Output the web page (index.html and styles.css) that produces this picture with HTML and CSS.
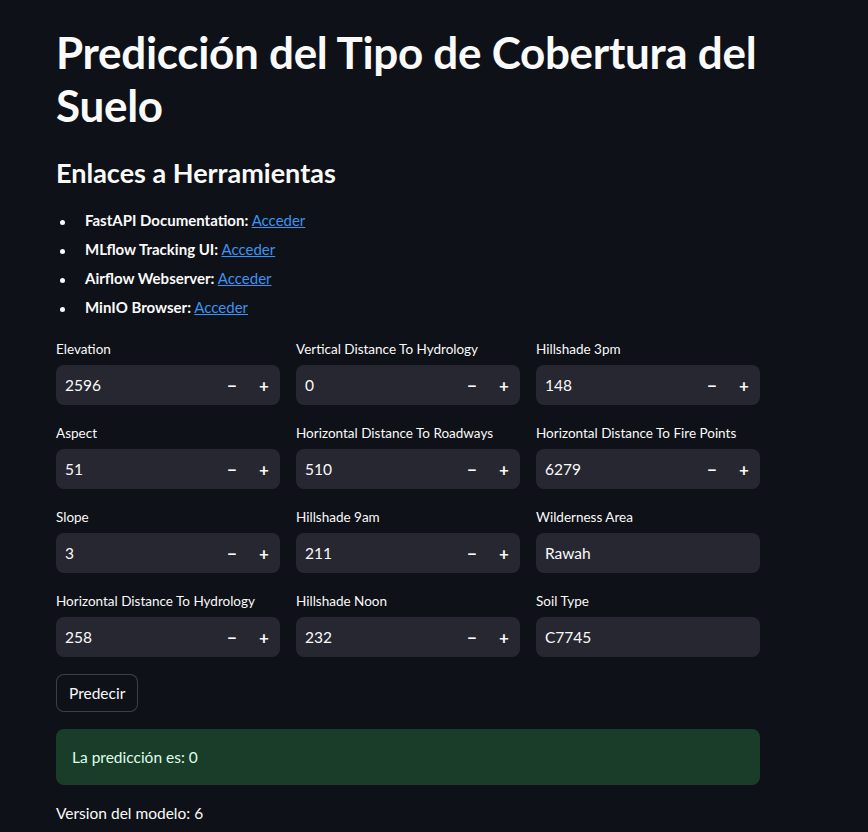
FILE: index.html
```html
<!DOCTYPE html>
<html lang="es">
<head>
<meta charset="utf-8">
<title>Predicción del Tipo de Cobertura del Suelo</title>
<link rel="stylesheet" href="styles.css">
</head>
<body>
<main class="page">
  <h1 class="title">Predicción del Tipo de Cobertura del Suelo</h1>
  <h3 class="subtitle">Enlaces a Herramientas</h3>
  <ul class="links">
    <li><strong>FastAPI Documentation:</strong> <a href="#">Acceder</a></li>
    <li><strong>MLflow Tracking UI:</strong> <a href="#">Acceder</a></li>
    <li><strong>Airflow Webserver:</strong> <a href="#">Acceder</a></li>
    <li><strong>MinIO Browser:</strong> <a href="#">Acceder</a></li>
  </ul>

  <div class="columns">
    <div class="col">
      <div class="field"><label class="label">Elevation</label>
        <div class="input"><span class="value">2596</span><span class="step">&minus;</span><span class="step">+</span></div></div>
      <div class="field"><label class="label">Aspect</label>
        <div class="input"><span class="value">51</span><span class="step">&minus;</span><span class="step">+</span></div></div>
      <div class="field"><label class="label">Slope</label>
        <div class="input"><span class="value">3</span><span class="step">&minus;</span><span class="step">+</span></div></div>
      <div class="field"><label class="label">Horizontal Distance To Hydrology</label>
        <div class="input"><span class="value">258</span><span class="step">&minus;</span><span class="step">+</span></div></div>
    </div>
    <div class="col">
      <div class="field"><label class="label">Vertical Distance To Hydrology</label>
        <div class="input"><span class="value">0</span><span class="step">&minus;</span><span class="step">+</span></div></div>
      <div class="field"><label class="label">Horizontal Distance To Roadways</label>
        <div class="input"><span class="value">510</span><span class="step">&minus;</span><span class="step">+</span></div></div>
      <div class="field"><label class="label">Hillshade 9am</label>
        <div class="input"><span class="value">211</span><span class="step">&minus;</span><span class="step">+</span></div></div>
      <div class="field"><label class="label">Hillshade Noon</label>
        <div class="input"><span class="value">232</span><span class="step">&minus;</span><span class="step">+</span></div></div>
    </div>
    <div class="col">
      <div class="field"><label class="label">Hillshade 3pm</label>
        <div class="input"><span class="value">148</span><span class="step">&minus;</span><span class="step">+</span></div></div>
      <div class="field"><label class="label">Horizontal Distance To Fire Points</label>
        <div class="input"><span class="value">6279</span><span class="step">&minus;</span><span class="step">+</span></div></div>
      <div class="field"><label class="label">Wilderness Area</label>
        <div class="input text"><span class="value">Rawah</span></div></div>
      <div class="field"><label class="label">Soil Type</label>
        <div class="input text"><span class="value">C7745</span></div></div>
    </div>
  </div>

  <button class="btn" type="button">Predecir</button>

  <div class="success">La predicción es: 0</div>

  <p class="version">Version del modelo: 6</p>
</main>
</body>
</html>
```

FILE: styles.css
```css
html, body {
  margin: 0;
  padding: 0;
  background: #0e1117;
}

body {
  color: #fafafa;
  font-family: Lato, "Noto Sans", sans-serif;
  font-size: 16px;
  min-height: 832px;
}

.page {
  width: 704px;
  padding: 26px 0 0 56px;
}

.title {
  margin: 0;
  font-size: 44px;
  font-weight: 700;
  line-height: 53px;
  letter-spacing: -0.3px;
}

.subtitle {
  margin: 24px 0 0;
  font-size: 27px;
  font-weight: 700;
  line-height: 34px;
  letter-spacing: 0;
}

.links {
  margin: 18px 0 0;
  padding-left: 29px;
  list-style: none;
}

.links li {
  line-height: 24px;
  margin-bottom: 5px;
  font-size: 15px;
}

.links li::before {
  content: "";
  display: inline-block;
  width: 5px;
  height: 5px;
  border-radius: 50%;
  background: #fafafa;
  margin-left: -25px;
  margin-right: 20px;
  vertical-align: middle;
}

.links strong {
  font-weight: 700;
}

.links a {
  color: #3a94f0;
  text-decoration: underline;
}

.columns {
  display: flex;
  gap: 16px;
  margin-top: 18px;
}

.col {
  flex: 1 1 0;
  display: flex;
  flex-direction: column;
  gap: 16px;
}

.label {
  display: block;
  font-size: 13.5px;
  line-height: 24px;
  margin-bottom: 4px;
}

.input {
  display: flex;
  align-items: center;
  height: 40px;
  background: #262730;
  border-radius: 8px;
}

.value {
  flex: 1;
  padding-left: 9px;
  font-size: 15.5px;
}

.step {
  width: 32px;
  text-align: center;
  font-size: 17px;
  font-weight: 700;
}

.btn {
  margin-top: 17px;
  height: 38px;
  padding: 0 12px;
  background: #0e1117;
  color: #fafafa;
  border: 1px solid rgba(250, 250, 250, 0.2);
  border-radius: 8px;
  font-family: inherit;
  font-size: 15.5px;
}

.success {
  margin-top: 17px;
  padding: 16px;
  line-height: 24px;
  background: #1a3d2a;
  color: #dffde9;
  border-radius: 8px;
  font-size: 15.5px;
}

.version {
  margin: 16px 0 0;
  line-height: 24px;
  font-size: 15.5px;
}
```
